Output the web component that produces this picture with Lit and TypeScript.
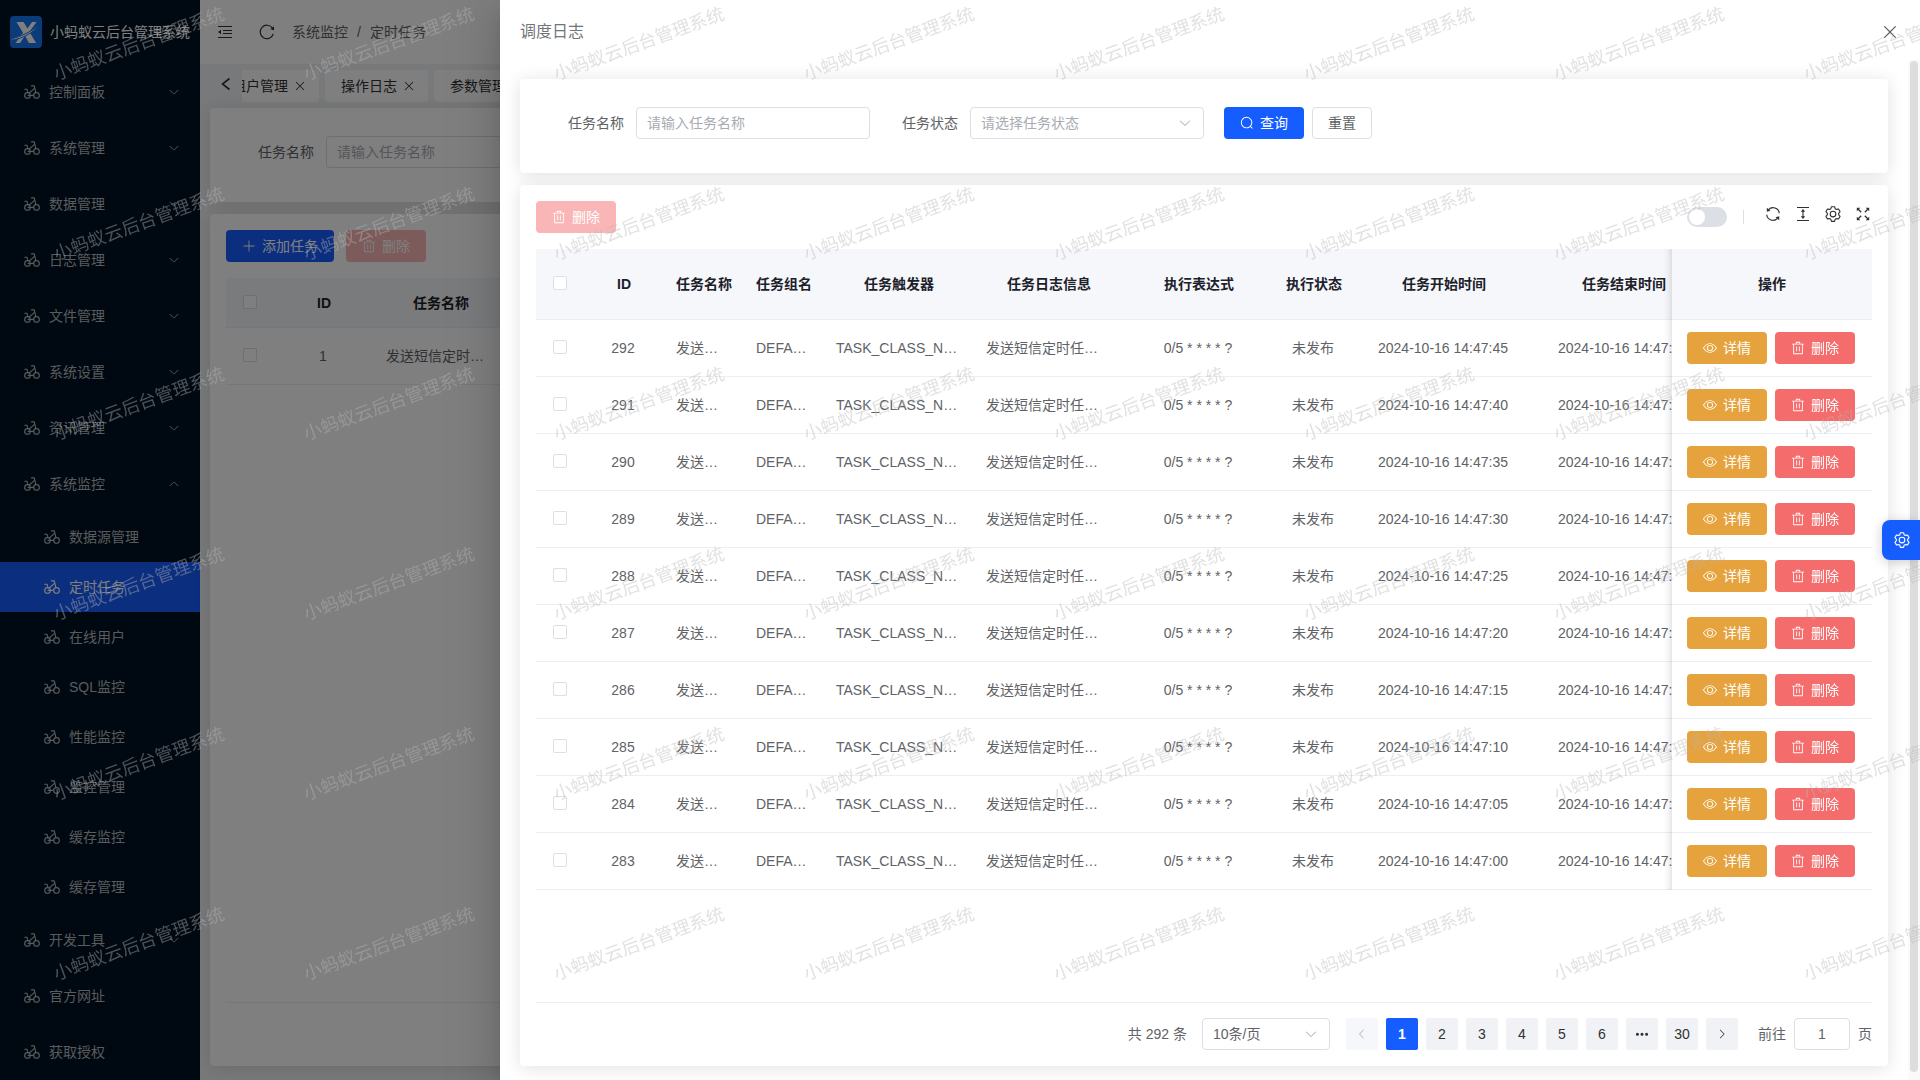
import { LitElement, html, css, svg, nothing } from "lit";
import { customElement, state } from "lit/decorators.js";
import { classMap } from "lit/directives/class-map.js";

const PATHS = {
  bicycle: [
    "M256 832a128 128 0 1 0 0-256 128 128 0 0 0 0 256zm0 64a192 192 0 1 1 0-384 192 192 0 0 1 0 384z",
    "M288 672h320q32 0 32 32t-32 32H288q-32 0-32-32t32-32z",
    "M768 832a128 128 0 1 0 0-256 128 128 0 0 0 0 256zm0 64a192 192 0 1 1 0-384 192 192 0 0 1 0 384z",
    "M480 192a32 32 0 0 1 0-64h160a32 32 0 0 1 31.04 24.256l96 384a32 32 0 0 1-62.08 15.488L615.04 192H480zM96 384a32 32 0 0 1 0-64h128a32 32 0 0 1 30.336 21.888l64 192a32 32 0 1 1-60.672 20.224L200.96 384H96z",
    "m373.376 599.808-42.752-47.616 320-288 42.752 47.616-320 288z",
  ],
  down: ["M831.872 340.864 512 652.672 192.128 340.864a30.592 30.592 0 0 0-42.752 0 29.12 29.12 0 0 0 0 41.6L489.664 714.24a32 32 0 0 0 44.672 0l340.288-331.712a29.12 29.12 0 0 0 0-41.728 30.592 30.592 0 0 0-42.752 0z"],
  left: ["M609.408 149.376 277.76 489.6a32 32 0 0 0 0 44.672l331.648 340.352a29.12 29.12 0 0 0 41.728 0 30.592 30.592 0 0 0 0-42.752L339.264 511.936l311.872-319.872a30.592 30.592 0 0 0 0-42.688 29.12 29.12 0 0 0-41.728 0z"],
  right: ["M340.864 149.312a30.592 30.592 0 0 0 0 42.752L652.736 512 340.864 831.872a30.592 30.592 0 0 0 0 42.752 29.12 29.12 0 0 0 41.728 0L714.24 534.336a32 32 0 0 0 0-44.672L382.592 149.376a29.12 29.12 0 0 0-41.728 0z"],
  trash: ["M160 256H96a32 32 0 0 1 0-64h256V95.936a32 32 0 0 1 32-32h256a32 32 0 0 1 32 32V192h256a32 32 0 1 1 0 64h-64v672a32 32 0 0 1-32 32H192a32 32 0 0 1-32-32V256zm448-64v-64H416v64h192zM224 896h576V256H224v640zm192-128a32 32 0 0 1-32-32V416a32 32 0 0 1 64 0v320a32 32 0 0 1-32 32zm192 0a32 32 0 0 1-32-32V416a32 32 0 0 1 64 0v320a32 32 0 0 1-32 32z"],
  view: ["M512 160c320 0 512 352 512 352S832 864 512 864 0 512 0 512s192-352 512-352zm0 64c-225.28 0-384.128 208.064-436.8 288 52.608 79.872 211.456 288 436.8 288 225.28 0 384.128-208.064 436.8-288-52.608-79.872-211.456-288-436.8-288zm0 64a224 224 0 1 1 0 448 224 224 0 0 1 0-448zm0 64a160.192 160.192 0 0 0-160 160c0 88.192 71.744 160 160 160s160-71.808 160-160-71.744-160-160-160z"],
  search: ["m795.904 750.72 124.992 124.928a32 32 0 0 1-45.248 45.248L750.656 795.904a416 416 0 1 1 45.248-45.248zM480 832a352 352 0 1 0 0-704 352 352 0 0 0 0 704z"],
  plus: ["M480 480V128a32 32 0 0 1 64 0v352h352a32 32 0 1 1 0 64H544v352a32 32 0 1 1-64 0V544H128a32 32 0 0 1 0-64h352z"],
  close: ["M764.288 214.592 512 466.88 259.712 214.592a31.936 31.936 0 0 0-45.12 45.12L466.752 512 214.528 764.224a31.936 31.936 0 1 0 45.12 45.184L512 557.184l252.288 252.288a31.936 31.936 0 0 0 45.12-45.12L557.12 512.064l252.288-252.352a31.936 31.936 0 1 0-45.12-45.184z"],
  more: ["M176 416a112 112 0 1 1 0 224 112 112 0 0 1 0-224zm336 0a112 112 0 1 1 0 224 112 112 0 0 1 0-224zm336 0a112 112 0 1 1 0 224 112 112 0 0 1 0-224z"],
  setting: ["M600.704 64a32 32 0 0 1 30.464 22.208l35.2 109.376c14.784 7.232 28.928 15.36 42.432 24.512l112.384-24.192a32 32 0 0 1 34.432 15.36L944.32 364.8a32 32 0 0 1-4.032 37.504l-77.12 85.12a357.12 357.12 0 0 1 0 49.024l77.12 85.248a32 32 0 0 1 4.032 37.504l-88.704 153.6a32 32 0 0 1-34.432 15.296L708.8 803.904c-13.44 9.088-27.648 17.28-42.368 24.512l-35.264 109.376A32 32 0 0 1 600.704 960H423.296a32 32 0 0 1-30.464-22.208L357.696 828.48a351.616 351.616 0 0 1-42.56-24.64l-112.32 24.256a32 32 0 0 1-34.432-15.36L79.68 659.2a32 32 0 0 1 4.032-37.504l77.12-85.248a357.12 357.12 0 0 1 0-48.896l-77.12-85.248A32 32 0 0 1 79.68 364.8l88.704-153.6a32 32 0 0 1 34.432-15.296l112.32 24.256c13.568-9.152 27.776-17.408 42.56-24.64l35.2-109.312A32 32 0 0 1 423.232 64H600.64zm-23.424 64H446.72l-36.352 113.088-24.512 11.968a294.113 294.113 0 0 0-34.816 20.096l-22.656 15.36-116.224-25.088-65.28 113.152 79.68 88.192-1.92 27.136a293.12 293.12 0 0 0 0 40.192l1.92 27.136-79.808 88.192 65.344 113.152 116.224-25.024 22.656 15.296a294.113 294.113 0 0 0 34.816 20.096l24.512 11.968L446.72 896h130.688l36.48-113.152 24.448-11.904a288.282 288.282 0 0 0 34.752-20.096l22.592-15.296 116.288 25.024 65.28-113.152-79.744-88.192 1.92-27.136a293.12 293.12 0 0 0 0-40.256l-1.92-27.136 79.808-88.128-65.344-113.152-116.288 24.96-22.592-15.232a287.616 287.616 0 0 0-34.752-20.096l-24.448-11.904L577.344 128zM512 320a192 192 0 1 1 0 384 192 192 0 0 1 0-384zm0 64a128 128 0 1 0 0 256 128 128 0 0 0 0-256z"],
};

const icon = (name: keyof typeof PATHS, size = 14) => html`
  <svg class="icon" width=${size} height=${size} viewBox="0 0 1024 1024" aria-hidden="true">
    ${PATHS[name].map((d) => svg`<path fill="currentColor" d=${d}></path>`)}
  </svg>`;

const foldIcon = html`
  <svg class="icon" width="14" height="14" viewBox="0 0 14 14" aria-hidden="true">
    <path d="M0 1.500h14M5 5.500h9M5 8.500h9M0 12.500h14" stroke="currentColor" stroke-width="1.200" fill="none" />
    <path d="M0 7l3-2.200v4.400z" fill="currentColor" />
  </svg>`;

const backIcon = html`
  <svg class="icon" width="16" height="16" viewBox="0 0 16 16" aria-hidden="true">
    <path d="M11.500 2.500L4.500 8l7 5.500" stroke="currentColor" stroke-width="1.600" fill="none" />
  </svg>`;

const reloadIcon = html`
  <svg class="icon" width="16" height="16" viewBox="0 0 16 16" aria-hidden="true">
    <path d="M14.300 10A6.700 6.700 0 1 1 13.500 4.200" stroke="currentColor" stroke-width="1.200" fill="none" />
    <path d="M15 2.200v4l-3.600-.9z" fill="currentColor" />
  </svg>`;

const syncIcon = html`
  <svg class="icon" width="16" height="16" viewBox="0 0 16 16" aria-hidden="true">
    <path d="M3.500 3.600A6.300 6.300 0 0 1 14.300 7.200M12.500 12.400A6.300 6.300 0 0 1 1.700 8.800" stroke="currentColor" stroke-width="1.200" fill="none" />
    <path d="M1.800 1.800v4l3.700-1zM14.200 14.200v-4l-3.700 1z" fill="currentColor" />
  </svg>`;

const heightIcon = html`
  <svg class="icon" width="16" height="16" viewBox="0 0 16 16" aria-hidden="true">
    <path d="M2 1.500h12M2 14.500h12M8 4v8" stroke="currentColor" stroke-width="1.100" fill="none" />
    <path d="M8 3l2.200 2.800H5.800zM8 13l2.200-2.800H5.800z" fill="currentColor" />
  </svg>`;

const fullIcon = html`
  <svg class="icon" width="16" height="16" viewBox="0 0 16 16" aria-hidden="true">
    <path d="M3 3l3.200 3.200M13 3L9.800 6.200M3 13l3.200-3.200M13 13L9.800 9.800" stroke="currentColor" stroke-width="1.300" fill="none" />
    <path d="M1.800 1.800h3.500l-3.500 3.500zM14.200 1.800v3.500l-3.500-3.500zM1.800 14.200v-3.500l3.500 3.500zM14.200 14.200h-3.500l3.500-3.500z" fill="currentColor" />
  </svg>`;

const logoMark = html`
  <svg class="logo-mark" width="32" height="32" viewBox="0 0 32 32" aria-hidden="true">
    <rect width="32" height="32" rx="4" fill="#1677f0" />
    <path d="M6.500 6h7l4 6.500L22 6h4.500l-7 9.800L26 27h-7l-4-7.200L10 27H5.500l7.500-10.200z" fill="#fff" />
    <path d="M1 22.800C9 21.500 21 15.500 30.500 8.800 23 16.500 12 23 1.500 24.200z" fill="#fff" stroke="#1677f0" stroke-width="1" />
  </svg>`;

interface MenuEntry {
  label: string;
  expandable?: boolean;
  children?: string[];
}

const MENU: MenuEntry[] = [
  { label: "控制面板", expandable: true },
  { label: "系统管理", expandable: true },
  { label: "数据管理", expandable: true },
  { label: "日志管理", expandable: true },
  { label: "文件管理", expandable: true },
  { label: "系统设置", expandable: true },
  { label: "资讯管理", expandable: true },
  {
    label: "系统监控",
    expandable: true,
    children: ["数据源管理", "定时任务", "在线用户", "SQL监控", "性能监控", "监控管理", "缓存监控", "缓存管理"],
  },
  { label: "开发工具", expandable: true },
  { label: "官方网址" },
  { label: "获取授权" },
];

const COLUMNS = [
  { label: "ID", width: 80 },
  { label: "任务名称", width: 80 },
  { label: "任务组名", width: 80 },
  { label: "任务触发器", width: 150 },
  { label: "任务日志信息", width: 150 },
  { label: "执行表达式", width: 150 },
  { label: "执行状态", width: 80 },
  { label: "任务开始时间", width: 180 },
  { label: "任务结束时间", width: 180 },
];

const LOGS = Array.from({ length: 10 }, (_, i) => {
  const time = `2024-10-16 14:47:${String(45 - i * 5).padStart(2, "0")}`;
  return [String(292 - i), "发送短信定时任务", "DEFAULT", "TASK_CLASS_NAME1", "发送短信定时任务执行", "0/5 * * * * ?", "未发布", time, time];
});

const PAGES = ["1", "2", "3", "4", "5", "6", "more", "30"];

@customElement("app-root")
export class AppRoot extends LitElement {
  @state() private page = "1";

  static styles = css`
    :host {
      display: block;
      height: 100vh;
      overflow: hidden;
      position: relative;
      font-family: "Liberation Sans", "Noto Sans CJK SC", sans-serif;
      font-size: 14px;
      line-height: 22px;
      color: #606266;
    }
    * { box-sizing: border-box; }
    button, input, select { font: inherit; color: inherit; margin: 0; }
    button { cursor: pointer; }
    a { color: inherit; text-decoration: none; }
    .icon { display: block; flex: none; }

    .layout { display: flex; height: 100%; }
    .sidebar { flex: 0 0 200px; background: #001122; color: #b4b7ba; overflow: hidden; }
    .brand { display: flex; align-items: center; gap: 8px; height: 64px; padding-left: 10px; color: #fff; white-space: nowrap; }
    .logo-mark { flex: none; display: block; }
    .menu-item { display: flex; align-items: center; gap: 8px; height: 56px; padding: 0 20px 0 23px; }
    .menu-item .grow { flex: 1; }
    .menu-item.sub { height: 50px; padding-left: 43px; }
    .menu-item.active { background: #165dff; color: #fff; }
    .flip { transform: rotate(180deg); }

    .main { flex: 1; min-width: 0; display: flex; flex-direction: column; background: #f0f2f5; }
    .topbar { display: flex; align-items: center; height: 64px; padding-left: 18px; background: #fff; color: #303133; }
    .icon-btn { display: flex; align-items: center; justify-content: center; padding: 0; border: 0; background: none; }
    .topbar .icon-btn + .icon-btn { margin: 0 17px 0 27px; }
    .crumbs { display: flex; gap: 9px; color: #606266; }
    .tabs { display: flex; align-items: center; height: 44px; padding-left: 18px; }
    .tabs .icon-btn { padding-bottom: 5px; color: #303133; }
    .tabs-view { flex: 1; min-width: 0; display: flex; gap: 6px; overflow: hidden; margin-left: 8px; }
    .tab { display: flex; flex: none; align-items: center; gap: 5px; height: 32px; padding: 0 12px 0 16px; border: 0; border-radius: 4px; background: #fff; color: #303133; }
    .tab.cut { margin-left: -26px; }
    .content { flex: 1; min-height: 0; display: flex; flex-direction: column; gap: 12px; padding: 0 10px 14px; }

    .card { background: #fff; border-radius: 4px; box-shadow: 0 2px 18px rgba(0, 0, 0, 0.12); }
    .filters { display: flex; align-items: flex-start; padding: 28px 16px 34px 32px; }
    .field { display: flex; align-items: center; gap: 12px; margin: 0 16px; }
    .field + .field { margin-right: 20px; }
    .text-input { width: 234px; height: 32px; padding: 0 10px; border: 1px solid #dcdfe6; border-radius: 4px; background: #fff; outline: none; }
    .text-input::placeholder { color: #a8abb2; opacity: 1; }
    .select { display: grid; align-items: center; position: relative; color: #a8abb2; }
    .select select { appearance: none; height: 32px; width: 234px; padding: 0 30px 0 10px; border: 1px solid #dcdfe6; border-radius: 4px; background: #fff; outline: none; }
    .select .icon { position: absolute; right: 12px; color: #a8abb2; pointer-events: none; }
    .btn { display: inline-flex; align-items: center; justify-content: center; gap: 6px; height: 32px; padding: 0 15px; border: 1px solid transparent; border-radius: 4px; color: #fff; white-space: nowrap; }
    .btn.primary { background: #165dff; }
    .btn.plain { background: #fff; border-color: #dcdfe6; color: #606266; }
    .btn.danger { background: #f56c6c; }
    .btn.warning { background: #e6a23c; }
    .btn:disabled { background: #fab6b6; cursor: not-allowed; }
    .filters .btn { margin-right: 8px; }

    .panel { flex: 1; min-height: 0; display: flex; flex-direction: column; padding: 16px; }
    .actions { display: flex; align-items: center; gap: 12px; margin-bottom: 16px; }
    .tools { display: flex; align-items: center; margin-left: auto; }
    .switch { appearance: none; width: 40px; height: 20px; padding: 2px; border-radius: 10px; background: #dcdfe6; }
    .switch::before { content: ""; display: block; width: 16px; height: 16px; border-radius: 50%; background: #fff; }
    .divider { width: 1px; height: 14px; margin: 0 20px 0 16px; background: #dcdfe6; }
    .tool-icons { display: flex; gap: 12px; padding-bottom: 6px; color: #303133; }
    .tool-icons .icon-btn { width: 18px; height: 18px; }

    .table-view { flex: 1; min-height: 0; overflow: hidden; }
    table { border-collapse: separate; border-spacing: 0; table-layout: fixed; width: 100%; }
    th, td { padding: 0 12px; border-bottom: 1px solid #ebeef5; text-align: center; background: #fff; white-space: nowrap; overflow: hidden; text-overflow: ellipsis; }
    td { height: 57px; padding-right: 14px; }
    th { height: 50px; background: #f5f7fb; color: #1d2129; font-weight: 700; }
    .logs { width: 1378px; min-width: 100%; }
    .logs th { height: 71px; }
    .col-check { width: 48px; padding: 0 0 2px; }
    .col-ops { width: 200px; position: sticky; right: 0; padding: 0; overflow: visible; }
    .col-ops::before { content: ""; position: absolute; top: 0; bottom: -1px; left: -10px; width: 10px; box-shadow: inset -10px 0 10px -10px rgba(0, 0, 0, 0.2); }
    .ops { display: flex; gap: 8px; padding: 0 15px; }
    .check { appearance: none; display: block; width: 14px; height: 14px; margin: 0 auto; border: 1px solid #dcdfe6; border-radius: 2px; background: #fff; }

    .footer { display: flex; align-items: center; justify-content: flex-end; min-height: 48px; padding-top: 15px; border-top: 1px solid #ebeef5; }
    .footer .select { margin: 0 16px 0 15px; color: #606266; }
    .footer .select select { width: 128px; }
    .pager { display: flex; gap: 8px; }
    .page { display: flex; align-items: center; justify-content: center; width: 32px; height: 32px; padding: 0; border: 0; border-radius: 2px; background: #f0f2f5; color: #303133; }
    .page:disabled { background: #f5f7fa; color: #a8abb2; }
    .page.current { background: #165dff; color: #fff; font-weight: 700; }
    .jump { display: flex; align-items: center; gap: 8px; margin-left: 20px; }
    .jump input { width: 56px; text-align: center; }

    .mask { position: absolute; inset: 0; display: flex; justify-content: flex-end; background: rgba(0, 0, 0, 0.5); }
    .drawer { width: calc(100% - 500px); display: flex; flex-direction: column; background: #fff; box-shadow: 0 16px 48px 16px rgba(0, 0, 0, 0.08), 0 12px 32px rgba(0, 0, 0, 0.12), 0 8px 16px -8px rgba(0, 0, 0, 0.16); }
    .drawer-head { display: flex; align-items: center; justify-content: space-between; flex: none; height: 60px; padding: 4px 20px 0; }
    .drawer-title { margin: 0; font-size: 16px; font-weight: 400; color: #72767b; }
    .drawer-body { flex: 1; min-height: 0; display: flex; }
    .drawer-content { flex: 1; min-width: 0; display: flex; flex-direction: column; gap: 12px; padding: 19px 20px 14px; }
    .scrollbar { flex: 0 0 12px; display: flex; padding: 1px 2px 8px; background: #fafafa; }
    .thumb { flex: 1; border-radius: 4px; background: #dddddd; }

    .watermark { position: absolute; inset: 0; overflow: hidden; pointer-events: none; display: grid; grid-template-columns: repeat(8, 250px); grid-auto-rows: 180px; padding-left: 14px; font-size: 18px; line-height: 24px; color: rgba(184, 184, 184, 0.42); }
    .mark { justify-self: center; margin-top: 32px; height: 24px; white-space: nowrap; transform: rotate(-20deg); }
    .float-setting { position: absolute; right: 0; top: 520px; width: 38px; height: 40px; border: 0; border-radius: 8px 0 0 8px; background: #165dff; color: #fff; display: flex; align-items: center; justify-content: center; padding: 0 0 0 2px; box-shadow: 0 2px 12px rgba(0, 0, 0, 0.2); }
  `;

  private menuLink(label: string, opts: { sub?: boolean; active?: boolean; arrow?: boolean; open?: boolean }) {
    return html`
      <a href="#" class=${classMap({ "menu-item": true, sub: !!opts.sub, active: !!opts.active })}>
        ${icon("bicycle", 18)}
        <span class="grow">${label}</span>
        ${opts.arrow ? html`<span class=${classMap({ flip: !!opts.open })}>${icon("down", 12)}</span>` : nothing}
      </a>`;
  }

  private renderSidebar() {
    return html`
      <aside class="sidebar">
        <div class="brand">${logoMark}<span>小蚂蚁云后台管理系统</span></div>
        <nav>
          ${MENU.map((m) => html`
            ${this.menuLink(m.label, { arrow: m.expandable, open: !!m.children })}
            ${(m.children ?? []).map((c) => this.menuLink(c, { sub: true, active: c === "定时任务" }))}
          `)}
        </nav>
      </aside>`;
  }

  private renderMain() {
    return html`
      <main class="main">
        <header class="topbar">
          <button class="icon-btn" aria-label="收起菜单">${foldIcon}</button>
          <button class="icon-btn" aria-label="刷新">${reloadIcon}</button>
          <div class="crumbs"><a href="#">系统监控</a><span>/</span><a href="#">定时任务</a></div>
        </header>
        <div class="tabs">
          <button class="icon-btn" aria-label="向左">${backIcon}</button>
          <div class="tabs-view">
            ${["租户管理", "操作日志", "参数管理"].map((t, i) => html`
              <button class=${classMap({ tab: true, cut: i === 0 })}>${t}${icon("close")}</button>`)}
          </div>
        </div>
        <div class="content">
          <form class="card filters">
            <div class="field">
              <label for="main-name">任务名称</label>
              <input id="main-name" class="text-input" placeholder="请输入任务名称" />
            </div>
          </form>
          <section class="card panel">
            <div class="actions">
              <button class="btn primary">${icon("plus")}添加任务</button>
              <button class="btn" disabled>${icon("trash")}删除</button>
            </div>
            <div class="table-view">
              <table>
                <colgroup><col width="48" /><col width="100" /><col width="134" /><col /></colgroup>
                <thead>
                  <tr><th class="col-check"><input class="check" type="checkbox" aria-label="全选" /></th><th>ID</th><th>任务名称</th><th></th></tr>
                </thead>
                <tbody>
                  <tr><td class="col-check"><input class="check" type="checkbox" aria-label="选择" /></td><td>1</td><td>发送短信定时任务</td><td></td></tr>
                </tbody>
              </table>
            </div>
            <div class="footer"></div>
          </section>
        </div>
      </main>`;
  }

  private renderLogs() {
    return html`
      <table class="logs">
        <colgroup>
          <col width="48" />
          ${COLUMNS.map((c) => html`<col width=${c.width} />`)}
          <col width="200" />
        </colgroup>
        <thead>
          <tr>
            <th class="col-check"><input class="check" type="checkbox" aria-label="全选" /></th>
            ${COLUMNS.map((c) => html`<th>${c.label}</th>`)}
            <th class="col-ops">操作</th>
          </tr>
        </thead>
        <tbody>
          ${LOGS.map((row) => html`
            <tr>
              <td class="col-check"><input class="check" type="checkbox" aria-label=${row[0]} /></td>
              ${row.map((cell) => html`<td>${cell}</td>`)}
              <td class="col-ops">
                <div class="ops">
                  <button class="btn warning">${icon("view")}详情</button>
                  <button class="btn danger">${icon("trash")}删除</button>
                </div>
              </td>
            </tr>`)}
        </tbody>
      </table>`;
  }

  private renderFooter() {
    return html`
      <div class="footer">
        <span>共 292 条</span>
        <div class="select">
          <select aria-label="每页条数"><option>10条/页</option></select>${icon("down")}
        </div>
        <div class="pager">
          <button class="page" disabled aria-label="上一页">${icon("left", 12)}</button>
          ${PAGES.map((p) => html`
            <button class=${classMap({ page: true, current: p === this.page })}
              @click=${() => { if (p !== "more") this.page = p; }}>
              ${p === "more" ? icon("more", 14) : p}
            </button>`)}
          <button class="page" aria-label="下一页">${icon("right", 12)}</button>
        </div>
        <div class="jump">
          <label for="jump">前往</label>
          <input id="jump" class="text-input" .value=${this.page} />
          <span>页</span>
        </div>
      </div>`;
  }

  private renderDrawer() {
    return html`
      <div class="drawer" role="dialog" aria-label="调度日志">
        <header class="drawer-head">
          <h2 class="drawer-title">调度日志</h2>
          <button class="icon-btn" aria-label="关闭">${icon("close", 20)}</button>
        </header>
        <div class="drawer-body">
          <div class="drawer-content">
            <form class="card filters" @submit=${(e: Event) => e.preventDefault()}>
              <div class="field">
                <label for="name">任务名称</label>
                <input id="name" class="text-input" placeholder="请输入任务名称" />
              </div>
              <div class="field">
                <label for="status">任务状态</label>
                <div class="select">
                  <select id="status"><option>请选择任务状态</option></select>${icon("down")}
                </div>
              </div>
              <button class="btn primary">${icon("search")}查询</button>
              <button class="btn plain" type="reset">重置</button>
            </form>
            <section class="card panel">
              <div class="actions">
                <button class="btn" disabled>${icon("trash")}删除</button>
                <div class="tools">
                  <input class="switch" type="checkbox" role="switch" aria-label="斑马纹" />
                  <span class="divider"></span>
                  <div class="tool-icons">
                    <button class="icon-btn" aria-label="刷新">${syncIcon}</button>
                    <button class="icon-btn" aria-label="密度">${heightIcon}</button>
                    <button class="icon-btn" aria-label="列设置">${icon("setting", 18)}</button>
                    <button class="icon-btn" aria-label="全屏">${fullIcon}</button>
                  </div>
                </div>
              </div>
              <div class="table-view">${this.renderLogs()}</div>
              ${this.renderFooter()}
            </section>
          </div>
          <div class="scrollbar"><div class="thumb"></div></div>
        </div>
      </div>`;
  }

  render() {
    return html`
      <div class="layout">${this.renderSidebar()}${this.renderMain()}</div>
      <div class="mask">${this.renderDrawer()}</div>
      <div class="watermark" aria-hidden="true">
        ${Array.from({ length: 48 }, () => html`<span class="mark">小蚂蚁云后台管理系统</span>`)}
      </div>
      <button class="float-setting" aria-label="设置">${icon("setting", 18)}</button>
    `;
  }
}
